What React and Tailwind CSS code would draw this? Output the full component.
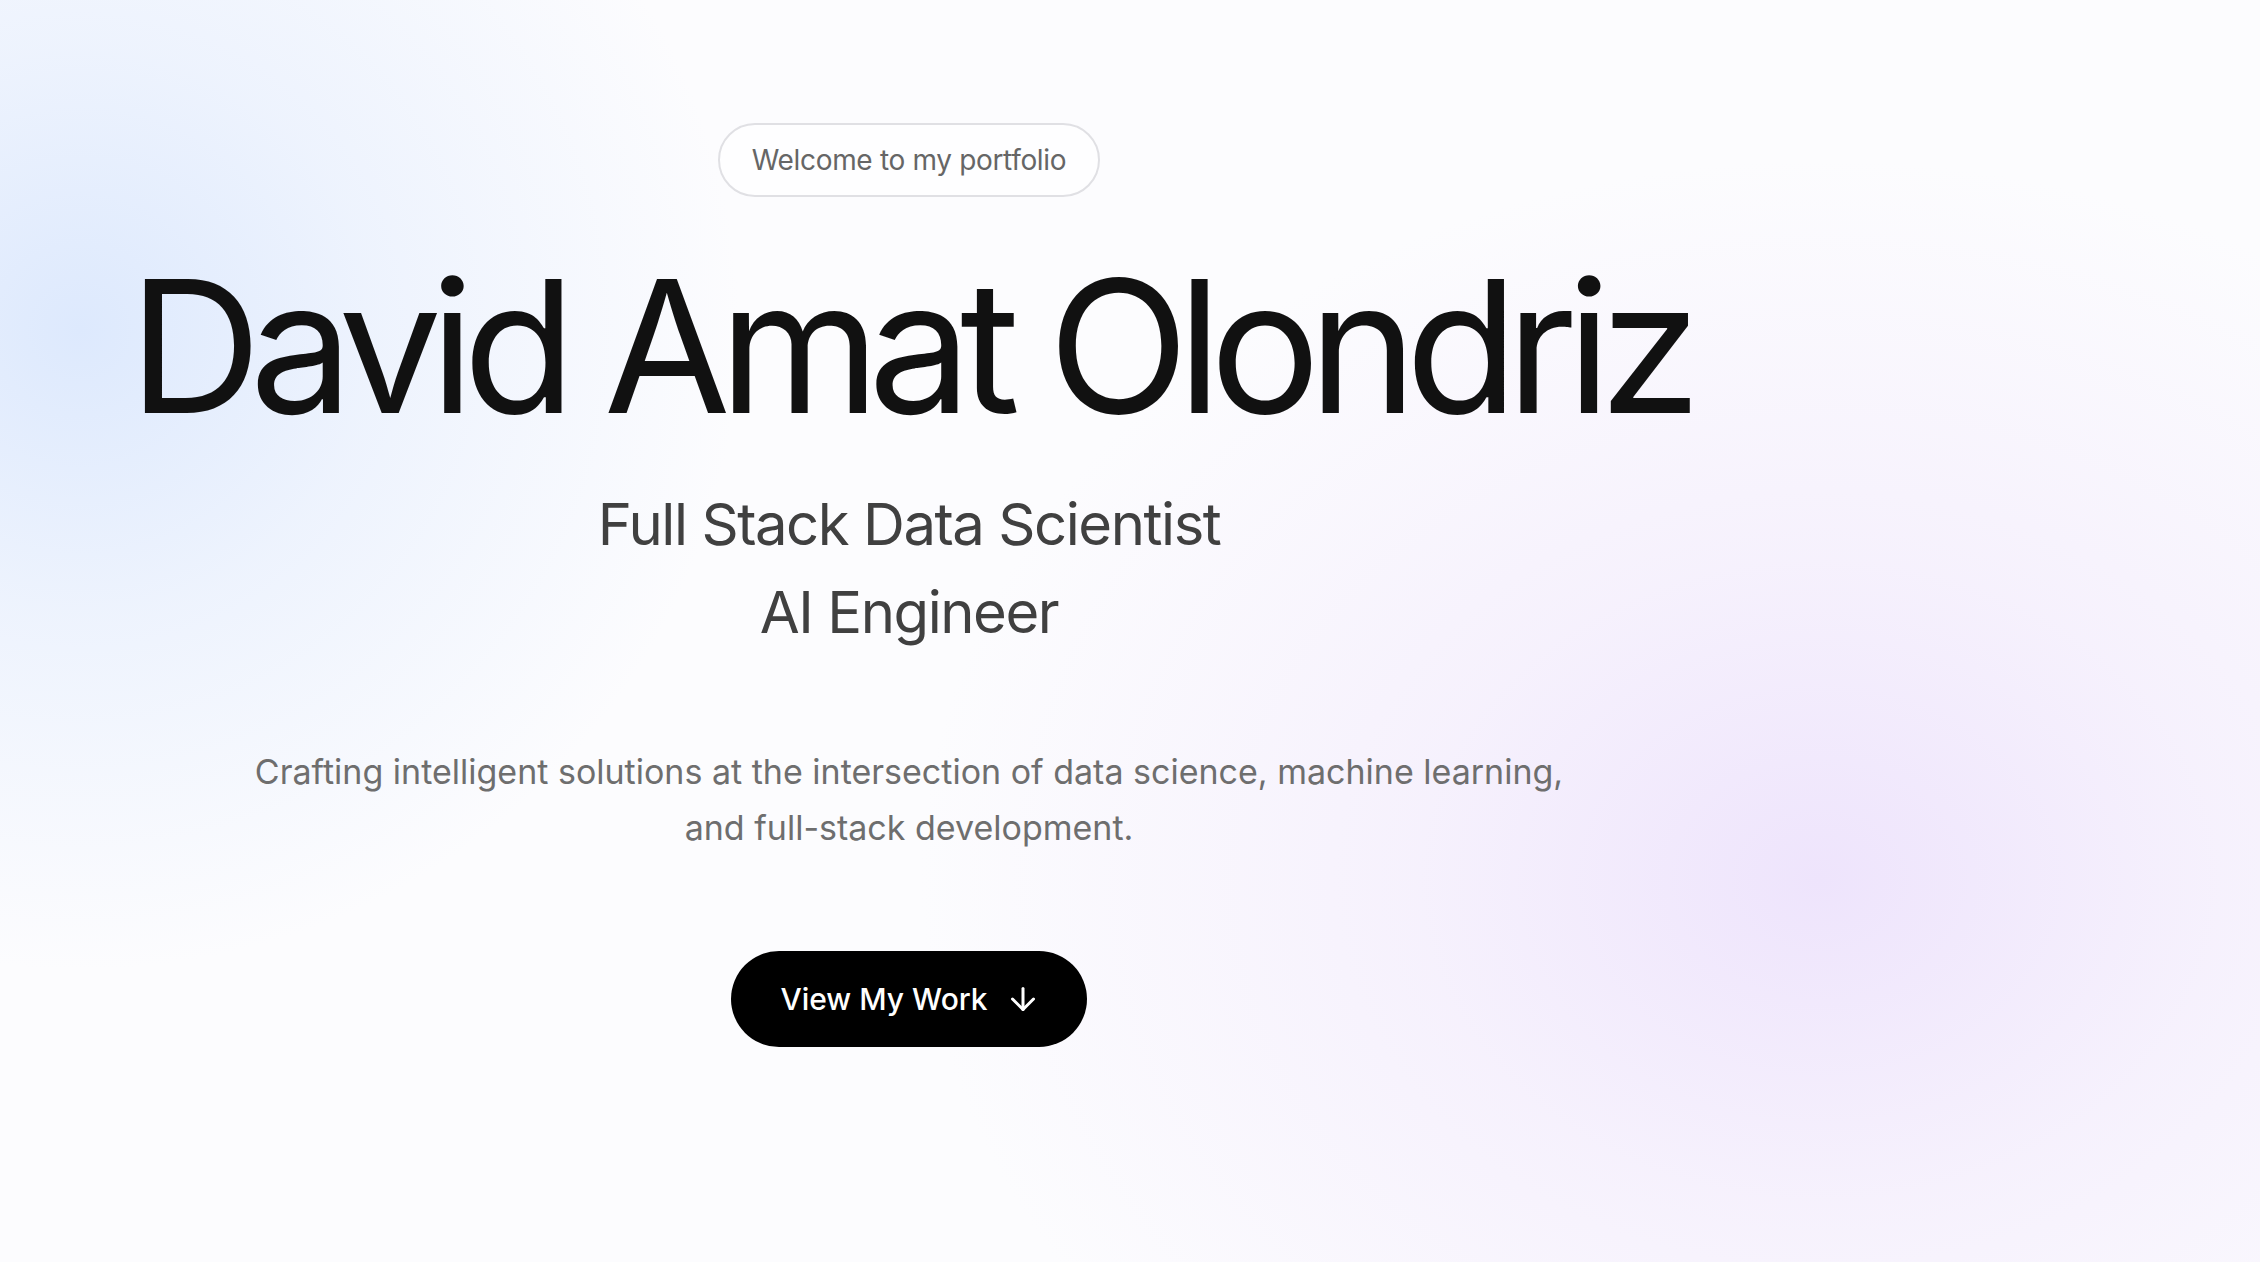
import { ArrowDown } from 'lucide-react';

export default function App() {
  return (
    <div className="relative h-[1262px] w-full overflow-hidden bg-[#fcfcfe] font-['Inter',sans-serif]">
      <div className="pointer-events-none absolute inset-0 bg-[image:radial-gradient(ellipse_660px_640px_at_80px_330px,rgba(221,233,253,1),rgba(226,236,253,0.55)_45%,rgba(240,245,254,0)_100%),radial-gradient(ellipse_900px_720px_at_1820px_880px,rgba(238,228,252,1),rgba(242,234,252,0.6)_45%,rgba(248,244,253,0)_100%)]" />
      <main className="relative flex w-[1818px] flex-col items-center pt-[123px]">
        <div className="rounded-full border-2 border-[#e0e0e4] bg-white/60 px-[32px] py-[15px] text-[28px] leading-[40px] tracking-[-0.012em] text-[#666666]">
          Welcome to my portfolio
        </div>
        <h1 className="mt-[57px] whitespace-nowrap text-[184px] font-normal leading-none tracking-[-0.064em] text-[#111111]">
          David Amat Olondriz
        </h1>
        <div className="mt-[42px] flex flex-col items-center text-[58px] leading-[88px] tracking-[-0.025em] text-[#404040]">
          <span>Full Stack Data Scientist</span>
          <span>AI Engineer</span>
        </div>
        <p className="mt-[88px] flex flex-col items-center text-[34px] leading-[56px] text-[#6e6e6e]">
          <span className="whitespace-nowrap">Crafting intelligent solutions at the intersection of data science, machine learning,</span>
          <span className="whitespace-nowrap">and full-stack development.</span>
        </p>
        <button className="mt-[95px] flex h-[96px] items-center gap-[17px] rounded-full bg-black pl-[49px] pr-[46px] text-[30px] font-medium text-white">
          <span>View My Work</span>
          <ArrowDown size={36} strokeWidth={2} />
        </button>
      </main>
    </div>
  );
}
